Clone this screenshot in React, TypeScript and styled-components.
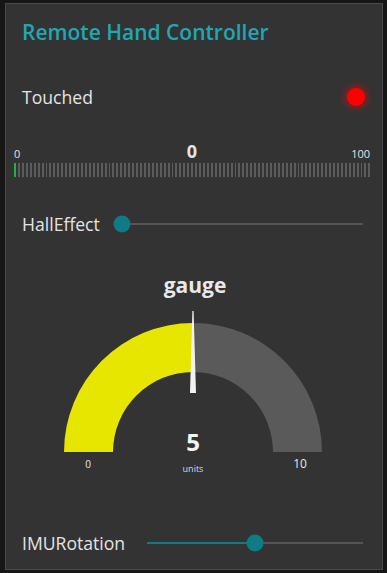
import React from 'react';
import styled, { createGlobalStyle } from 'styled-components';

const Global = createGlobalStyle`
  html, body { margin: 0; padding: 0; background: #161616; }
  body { font-family: "Open Sans", "Noto Sans", sans-serif; }
`;

const Panel = styled.div`
  box-sizing: border-box;
  margin: 3px 4px 0 5px;
  height: 567px;
  border: 1px solid #4a4a4a;
  background: #333333;
  display: flex;
  flex-direction: column;
`;

const Header = styled.div`
  box-sizing: border-box;
  height: 72px;
  padding: 15px 0 0 16px;
  color: #1fa8b3;
  font-size: 21px;
  font-weight: 600;
  line-height: 26px;
`;

const Row = styled.div<{ $h: number; $mt?: number }>`
  box-sizing: border-box;
  height: ${(p) => p.$h}px;
  margin-top: ${(p) => p.$mt ?? 0}px;
  padding: 0 19px 0 16px;
  display: flex;
  align-items: center;
`;

const Label = styled.span`
  color: #e4e4e4;
  font-size: 17.6px;
  line-height: 22px;
  white-space: nowrap;
`;

const Led = styled.span`
  margin-left: auto;
  margin-right: -2px;
  width: 18px;
  height: 18px;
  border-radius: 50%;
  background: #ff0000;
  box-shadow: 0 0 7px 2px rgba(255, 0, 0, 0.55);
`;

const Meter = styled.div`
  box-sizing: border-box;
  margin-top: 22px;
  padding: 0 12px 0 8px;
  display: flex;
  flex-direction: column;
`;

const MeterLabels = styled.div`
  display: grid;
  grid-template-columns: 1fr auto 1fr;
  align-items: end;
  height: 20px;
  color: #e4e4e4;
`;

const SmallNum = styled.span<{ $end?: boolean }>`
  font-size: 11px;
  line-height: 12px;
  justify-self: ${(p) => (p.$end ? 'end' : 'start')};
`;

const BigNum = styled.span`
  font-size: 18px;
  font-weight: 700;
  line-height: 18px;
`;

const Ticks = styled.div`
  margin-top: 3px;
  height: 14px;
  display: flex;
  gap: 2px;
`;

const Tick = styled.span<{ $on: boolean }>`
  flex: 1;
  background: ${(p) => (p.$on ? '#1db34a' : '#5c5c5c')};
`;

const Track = styled.div`
  position: relative;
  flex: 1;
  height: 2px;
  margin-left: 22px;
  background: #555555;
`;

const Fill = styled.div`
  position: absolute;
  left: 0;
  top: 0;
  height: 100%;
  background: #0f7c85;
`;

const Thumb = styled.div`
  position: absolute;
  top: 50%;
  width: 17px;
  height: 17px;
  border-radius: 50%;
  background: #0f7c85;
  transform: translate(-50%, -50%);
`;

const GaugeSection = styled.div`
  display: flex;
  flex-direction: column;
  align-items: center;
`;

const GaugeTitle = styled.div`
  margin-top: 28px;
  color: #e8e8e8;
  font-size: 21px;
  font-weight: 700;
  line-height: 26px;
  margin-left: 2px;
`;

const GaugeSvg = styled.svg`
  display: block;
  width: 376px;
  height: 178px;
`;

function Slider({ value }: { value: number }) {
  const pct = `${value * 100}%`;
  return (
    <Track>
      <Fill style={{ width: pct }} />
      <Thumb style={{ left: pct }} />
    </Track>
  );
}

function Gauge() {
  const cx = 187;
  const cy = 154;
  const R = 129;
  const r = 80;
  const yellow = `M ${cx - R} ${cy} A ${R} ${R} 0 0 1 ${cx} ${cy - R} L ${cx} ${cy - r} A ${r} ${r} 0 0 0 ${cx - r} ${cy} Z`;
  const gray = `M ${cx} ${cy - R} A ${R} ${R} 0 0 1 ${cx + R} ${cy} L ${cx + r} ${cy} A ${r} ${r} 0 0 0 ${cx} ${cy - r} Z`;
  const needle = `${cx - 3},${cy - 59} ${cx + 3},${cy - 59} ${cx + 0.6},${cy - 141} ${cx - 0.6},${cy - 141}`;
  return (
    <GaugeSvg viewBox="0 0 376 178">
      <path d={yellow} fill="#e6e600" />
      <path d={gray} fill="#5a5a5a" />
      <polygon points={needle} fill="#f2f2f2" />
      <text x={cx} y={153} textAnchor="middle" fill="#f4f4f4" fontSize="24" fontWeight="700" fontFamily="'Open Sans', sans-serif">5</text>
      <text x={cx} y={174} textAnchor="middle" fill="#dcd6e6" fontSize="9" fontFamily="'Open Sans', sans-serif">units</text>
      <text x={82} y={170} textAnchor="middle" fill="#e8e8e8" fontSize="10" fontFamily="'Open Sans', sans-serif">0</text>
      <text x={294} y={170} textAnchor="middle" fill="#e8e8e8" fontSize="12" fontFamily="'Open Sans', sans-serif">10</text>
    </GaugeSvg>
  );
}

export default function App() {
  const ticks = Array.from({ length: 91 }, (_, i) => i);
  return (
    <>
      <Global />
      <Panel>
        <Header>Remote Hand Controller</Header>
        <Row $h={42}>
          <Label>Touched</Label>
          <Led />
        </Row>
        <Meter>
          <MeterLabels>
            <SmallNum>0</SmallNum>
            <BigNum>0</BigNum>
            <SmallNum $end>100</SmallNum>
          </MeterLabels>
          <Ticks>
            {ticks.map((i) => (
              <Tick key={i} $on={i === 0} />
            ))}
          </Ticks>
        </Meter>
        <Row $h={40} $mt={27}>
          <Label>HallEffect</Label>
          <Slider value={0} />
        </Row>
        <GaugeSection>
          <GaugeTitle>gauge</GaugeTitle>
          <Gauge />
        </GaugeSection>
        <Row $h={40} $mt={47}>
          <Label>IMURotation</Label>
          <Slider value={0.5} />
        </Row>
      </Panel>
    </>
  );
}
